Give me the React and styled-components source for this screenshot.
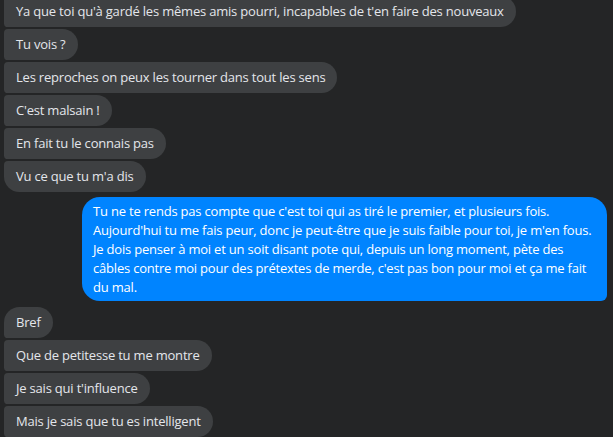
import React from "react";
import styled, { createGlobalStyle } from "styled-components";

const GlobalStyle = createGlobalStyle`
  html, body {
    margin: 0;
    padding: 0;
    background: #242526;
    overflow: hidden;
  }
`;

const Thread = styled.div`
  width: 613px;
  height: 437px;
  overflow: hidden;
  background: #242526;
  font-family: "Open Sans", "Noto Sans", sans-serif;
  font-size: 13px;
  letter-spacing: -0.2px;
  line-height: 19px;
`;

const Column = styled.div`
  display: flex;
  flex-direction: column;
  margin-top: -4px;
`;

const Group = styled.div`
  display: flex;
  flex-direction: column;
  align-items: ${(props) => (props.mine ? "flex-end" : "flex-start")};
  gap: 2px;
  padding: ${(props) => (props.mine ? "0 6px 0 0" : "0 0 0 4px")};
  margin-bottom: ${(props) => props.after || 0}px;
`;

const Bubble = styled.div`
  padding: 6px 12px;
  background: #3e4042;
  color: #e4e6eb;
  white-space: nowrap;
  border-radius: ${(props) =>
    props.pos === "first"
      ? "16px 16px 16px 4px"
      : props.pos === "last"
      ? "4px 16px 16px 16px"
      : "4px 16px 16px 4px"};
`;

const BlueBubble = styled.div`
  box-sizing: border-box;
  width: 525px;
  padding: 5px 11px 4px;
  background: #0084ff;
  color: #ffffff;
  border-radius: 18px 18px 6px 18px;
`;

const Line = styled.div`
  white-space: nowrap;
`;

const before = [
  "Ya que toi qu'à gardé les mêmes amis pourri, incapables de t'en faire des nouveaux",
  "Tu vois ?",
  "Les reproches on peux les tourner dans tout les sens",
  "C'est malsain !",
  "En fait tu le connais pas",
  "Vu ce que tu m'a dis",
];

const mine = [
  "Tu ne te rends pas compte que c'est toi qui as tiré le premier, et plusieurs fois.",
  "Aujourd'hui tu me fais peur, donc je peut-être que je suis faible pour toi, je m'en fous.",
  "Je dois penser à moi et un soit disant pote qui, depuis un long moment, pète des",
  "câbles contre moi pour des prétextes de merde, c'est pas bon pour moi et ça me fait",
  "du mal.",
];

const after = [
  "Bref",
  "Que de petitesse tu me montre",
  "Je sais qui t'influence",
  "Mais je sais que tu es intelligent",
];

const position = (i, n) => (i === 0 ? "first" : i === n - 1 ? "last" : "middle");

const App = () => {
  return (
    <Thread>
      <GlobalStyle />
      <Column>
        <Group after={5}>
          {before.map((text, i) => (
            <Bubble key={i} pos={i === 0 ? "middle" : position(i, before.length)}>
              {text}
            </Bubble>
          ))}
        </Group>
        <Group mine after={6}>
          <BlueBubble>
            {mine.map((line, i) => (
              <Line key={i}>{line}</Line>
            ))}
          </BlueBubble>
        </Group>
        <Group>
          {after.map((text, i) => (
            <Bubble key={i} pos={i === 0 ? "first" : "middle"}>
              {text}
            </Bubble>
          ))}
        </Group>
      </Column>
    </Thread>
  );
};

export default App;
